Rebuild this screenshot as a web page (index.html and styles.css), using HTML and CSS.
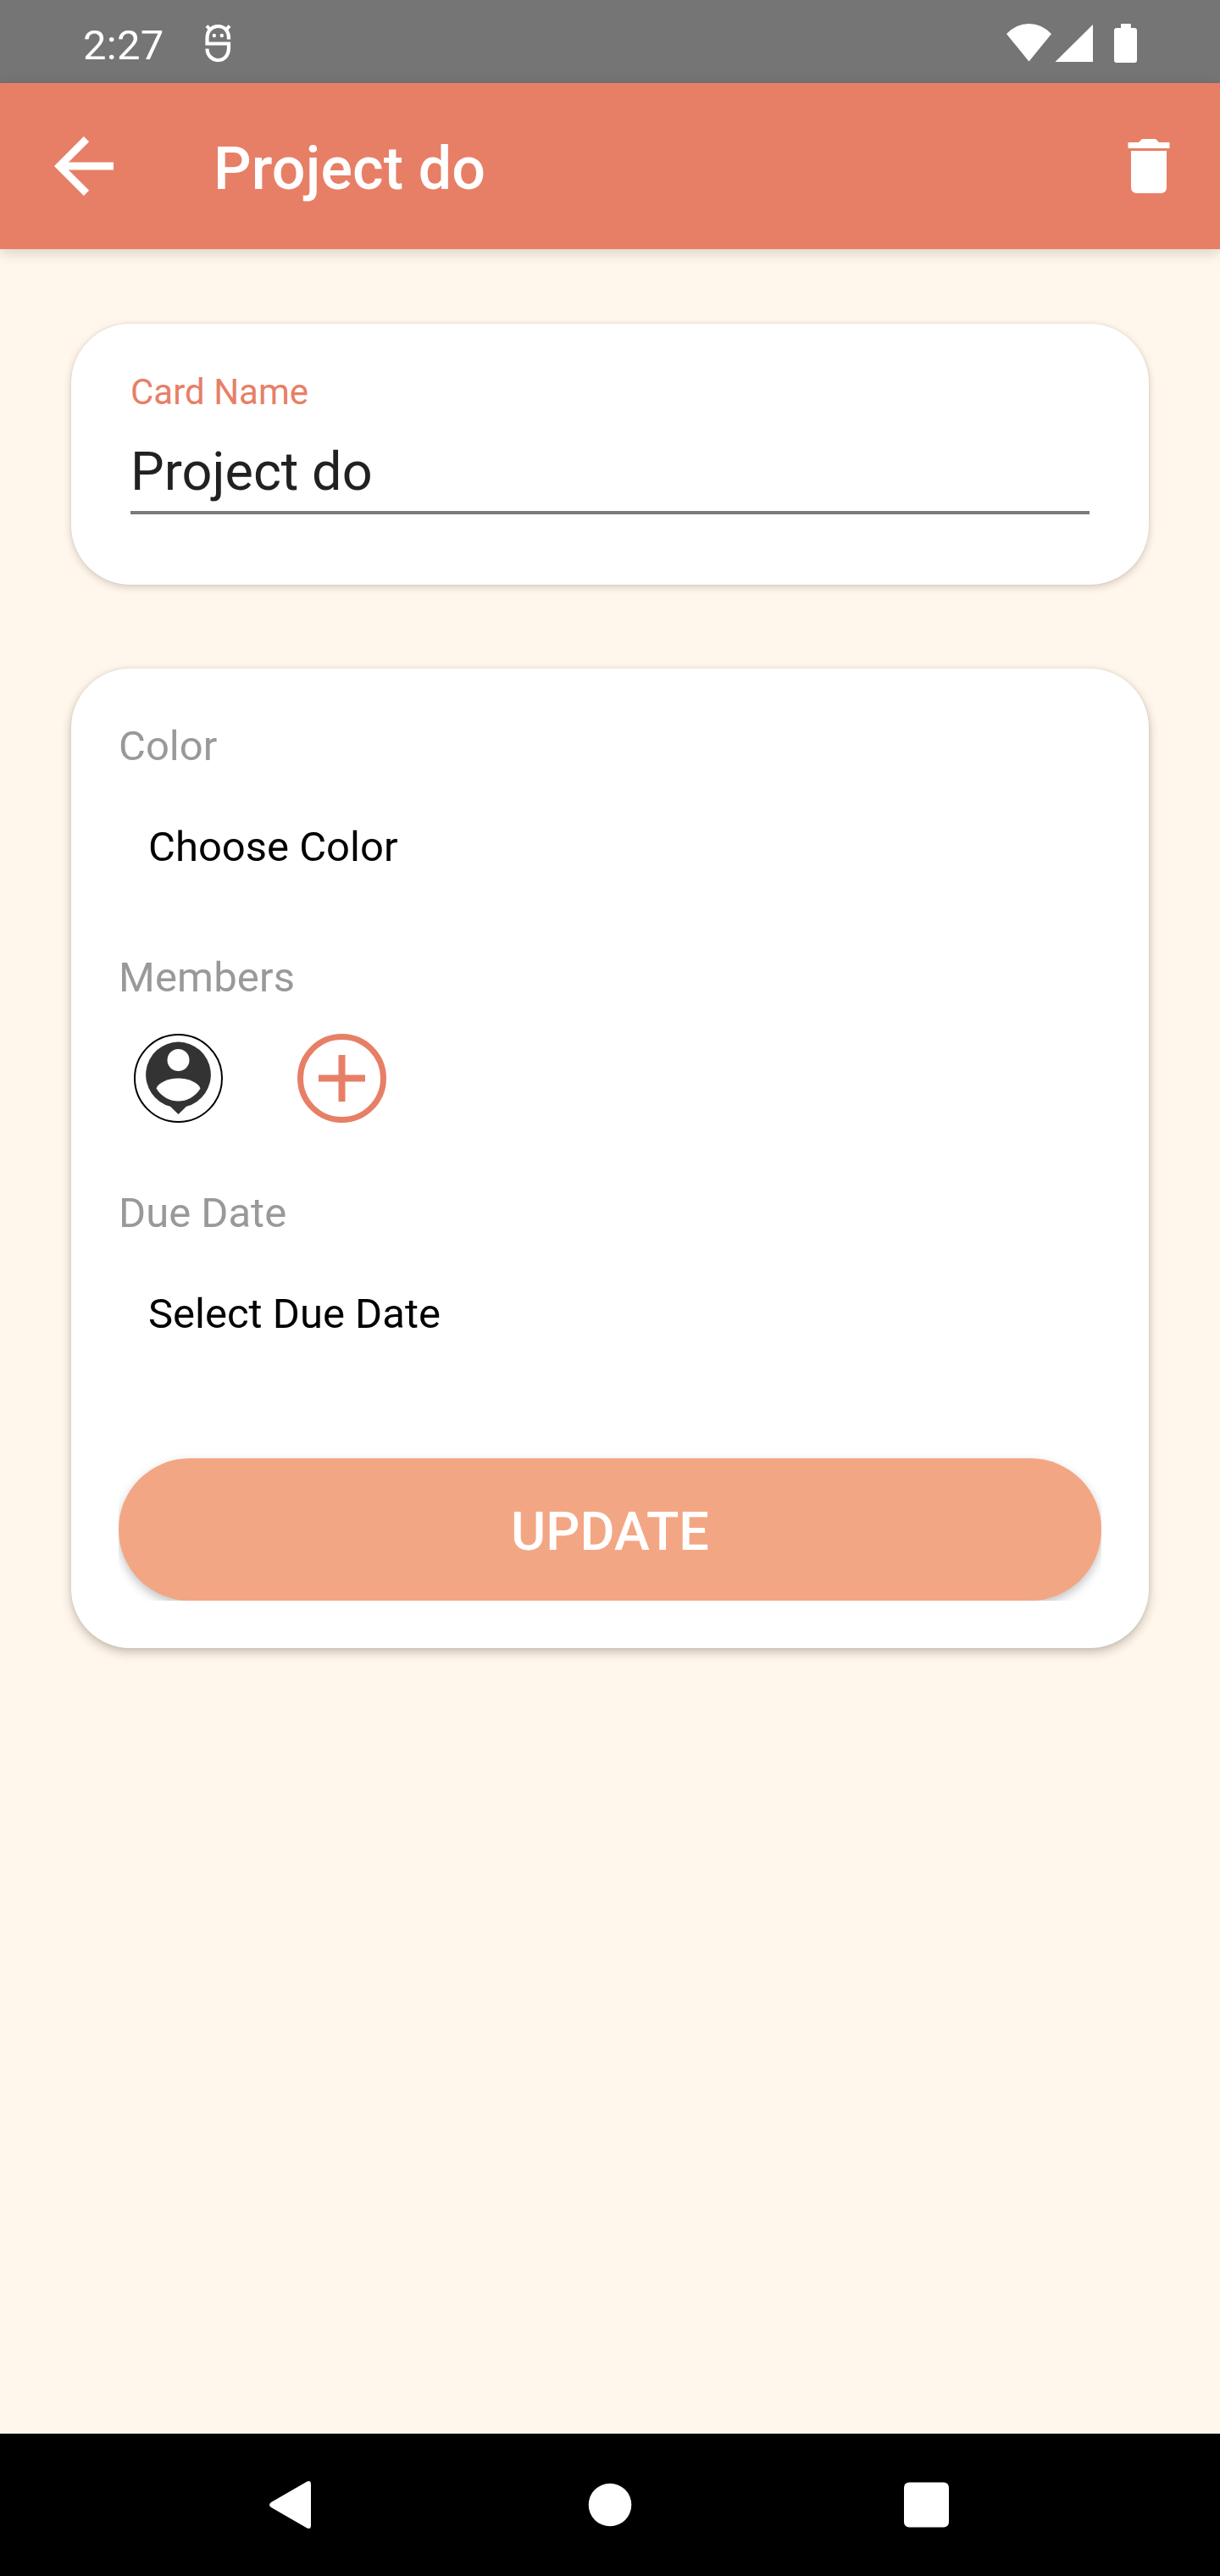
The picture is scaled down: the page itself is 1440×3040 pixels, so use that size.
FILE: index.html
```html
<!DOCTYPE html>
<html lang="en">
<head>
<meta charset="utf-8">
<title>Card details</title>
<link rel="stylesheet" href="styles.css">
</head>
<body>
<div class="screen">
  <header class="status">
    <span class="clock">2:27</span>
    <svg class="debug" width="33" height="46" viewBox="0 0 33 46" fill="none" stroke="#fff">
      <path d="M29 18.500V17C29 8.500 24 3 16.500 3S3.500 8.500 3.500 17V23.500H29V28C29 37 24 43 16.500 43S3.500 37 3.500 29.500" stroke-width="4.200"/>
      <path d="M3 2.500L7 7M30 2.500L26 7" stroke-width="4"/>
      <circle cx="11.800" cy="14" r="2.200" fill="#fff" stroke="none"/>
      <circle cx="20.800" cy="14" r="2.200" fill="#fff" stroke="none"/>
    </svg>
    <svg class="signals" width="155" height="46" viewBox="0 0 155 46" fill="#fff">
      <path d="M0 12Q11.500 0 26.500 0T53 12L26.500 44.500Z"/>
      <path d="M102 1V45H57.500Z"/>
      <path d="M135 0h11.800v5h4.200q3 0 3 3v35q0 3-3 3h-21q-3 0-3-3V8q0-3 3-3h5z"/>
    </svg>
  </header>
  <nav class="toolbar">
    <svg class="back" width="70" height="70" viewBox="0 0 70 70" fill="none" stroke="#fff" stroke-width="8.800">
      <path d="M70 35H8M38 3.100L6.200 35L38 66.900"/>
    </svg>
    <h1 class="title">Project do</h1>
    <svg class="trash" width="50" height="64" viewBox="0 0 50 64" fill="#fff">
      <path d="M0.500 4H13L17 0H33L37 4H49.500V11H0.500Z"/>
      <path d="M4 14H46V57Q46 64 39 64H11Q4 64 4 57Z"/>
    </svg>
  </nav>
  <main class="content">
    <section class="card name-card">
      <div class="field-label">Card Name</div>
      <div class="field-value">Project do</div>
    </section>
    <section class="card details">
      <div class="label">Color</div>
      <div class="choice">Choose Color</div>
      <div class="label members-label">Members</div>
      <div class="members">
        <svg width="105" height="105" viewBox="0 0 105 105">
          <circle cx="52.500" cy="52.500" r="51.500" fill="#fff" stroke="#000" stroke-width="2"/>
          <path d="M52.500 9.500A38.800 38.800 0 0 1 62 85.800L52.500 95L43 85.800A38.800 38.800 0 0 1 52.500 9.500Z" fill="#333"/>
          <circle cx="52.500" cy="31" r="13" fill="#fff"/>
          <path d="M26.500 64.500C29 57 42 52.500 52.500 52.500S76 57 78.500 64.500C72 75 62 79.500 52.500 79.500S33 75 26.500 64.500Z" fill="#fff"/>
        </svg>
        <svg width="105" height="105" viewBox="0 0 105 105" fill="none" stroke="#e77f66">
          <circle cx="52.500" cy="52.500" r="49" stroke-width="7"/>
          <path d="M25 52.500H80M52.500 25V80" stroke-width="8"/>
        </svg>
      </div>
      <div class="label">Due Date</div>
      <div class="choice">Select Due Date</div>
      <div class="button-clip"><button class="update">UPDATE</button></div>
    </section>
  </main>
  <footer class="navbar">
    <svg width="50" height="56" viewBox="0 0 50 56" fill="#fff"><path d="M44 .8Q49 -1.500 49 4V52Q49 57.500 44 55.200L2 31Q-2 28 2 25Z"/></svg>
    <svg class="home" width="52" height="52" viewBox="0 0 52 52" fill="#fff"><circle cx="26" cy="26" r="25.300"/></svg>
    <svg width="53" height="54" viewBox="0 0 53 54" fill="#fff"><rect y=".5" width="53" height="53" rx="6"/></svg>
  </footer>
</div>
</body>
</html>
```
FILE: styles.css
```css
* { box-sizing: border-box; }
body { margin: 0; font-family: Roboto, sans-serif; background: #fff6ec; }
svg { display: block; flex: none; }
.screen { width: 1440px; height: 3040px; display: flex; flex-direction: column; overflow: hidden; }

.status { height: 98px; background: #757575; display: flex; padding: 0 97px 0 98px; color: #fff; }
.clock { font-size: 49px; line-height: 108px; width: 143px; letter-spacing: .3px; }
.debug { margin-top: 28px; }
.signals { margin: 28px 0 0 auto; }

.toolbar { height: 196px; background: #e77f66; display: flex; padding: 0 59px 0 64px; color: #fff; box-shadow: 0 4px 16px rgba(0, 0, 0, .16); }
.back { margin-top: 63px; }
.title { margin: 0 0 0 118px; font-size: 70px; line-height: 202px; font-weight: 500; letter-spacing: .15px; }
.trash { margin: 66px 0 0 auto; }

.content { flex: 1; padding: 88px 84px 0; }
.card { background: #fff; border-radius: 70px; box-shadow: 0 3px 10px rgba(60, 40, 20, .2), 0 0 3px rgba(60, 40, 20, .1); }
.name-card { height: 308px; padding: 56px 70px 0; }
.field-label { font-size: 42px; line-height: 50px; color: #e77f66; }
.field-value { margin-top: 32px; height: 87px; font-size: 63px; line-height: 74px; color: #212121; border-bottom: 4px solid #7b7b7b; }

.details { margin-top: 99px; height: 1156px; padding: 62px 56px 56px; box-shadow: 0 5px 12px rgba(60, 50, 30, .28), 0 0 4px rgba(60, 50, 30, .1); }
.label, .choice { font-size: 49px; line-height: 60px; }
.label { color: #999; }
.choice { margin-top: 59px; padding-left: 35px; color: #000; }
.members-label { margin-top: 94px; letter-spacing: .15px; }
.members { display: flex; gap: 88px; margin: 36px 0 77px 18px; }
.button-clip { margin-top: 140px; height: 168px; clip-path: inset(-6px 0 0); }
.update { display: block; width: 100%; height: 168px; padding: 6px 0 0; border: 0; border-radius: 84px; background: #f3a683; color: #fff; font: 500 63px/74px Roboto, sans-serif; box-shadow: 0 5px 12px rgba(0, 0, 0, .24); }

.navbar { height: 168px; background: #000; display: flex; align-items: center; justify-content: space-between; padding: 0 320px 0 318px; }
.home { margin-left: 4px; }
```
